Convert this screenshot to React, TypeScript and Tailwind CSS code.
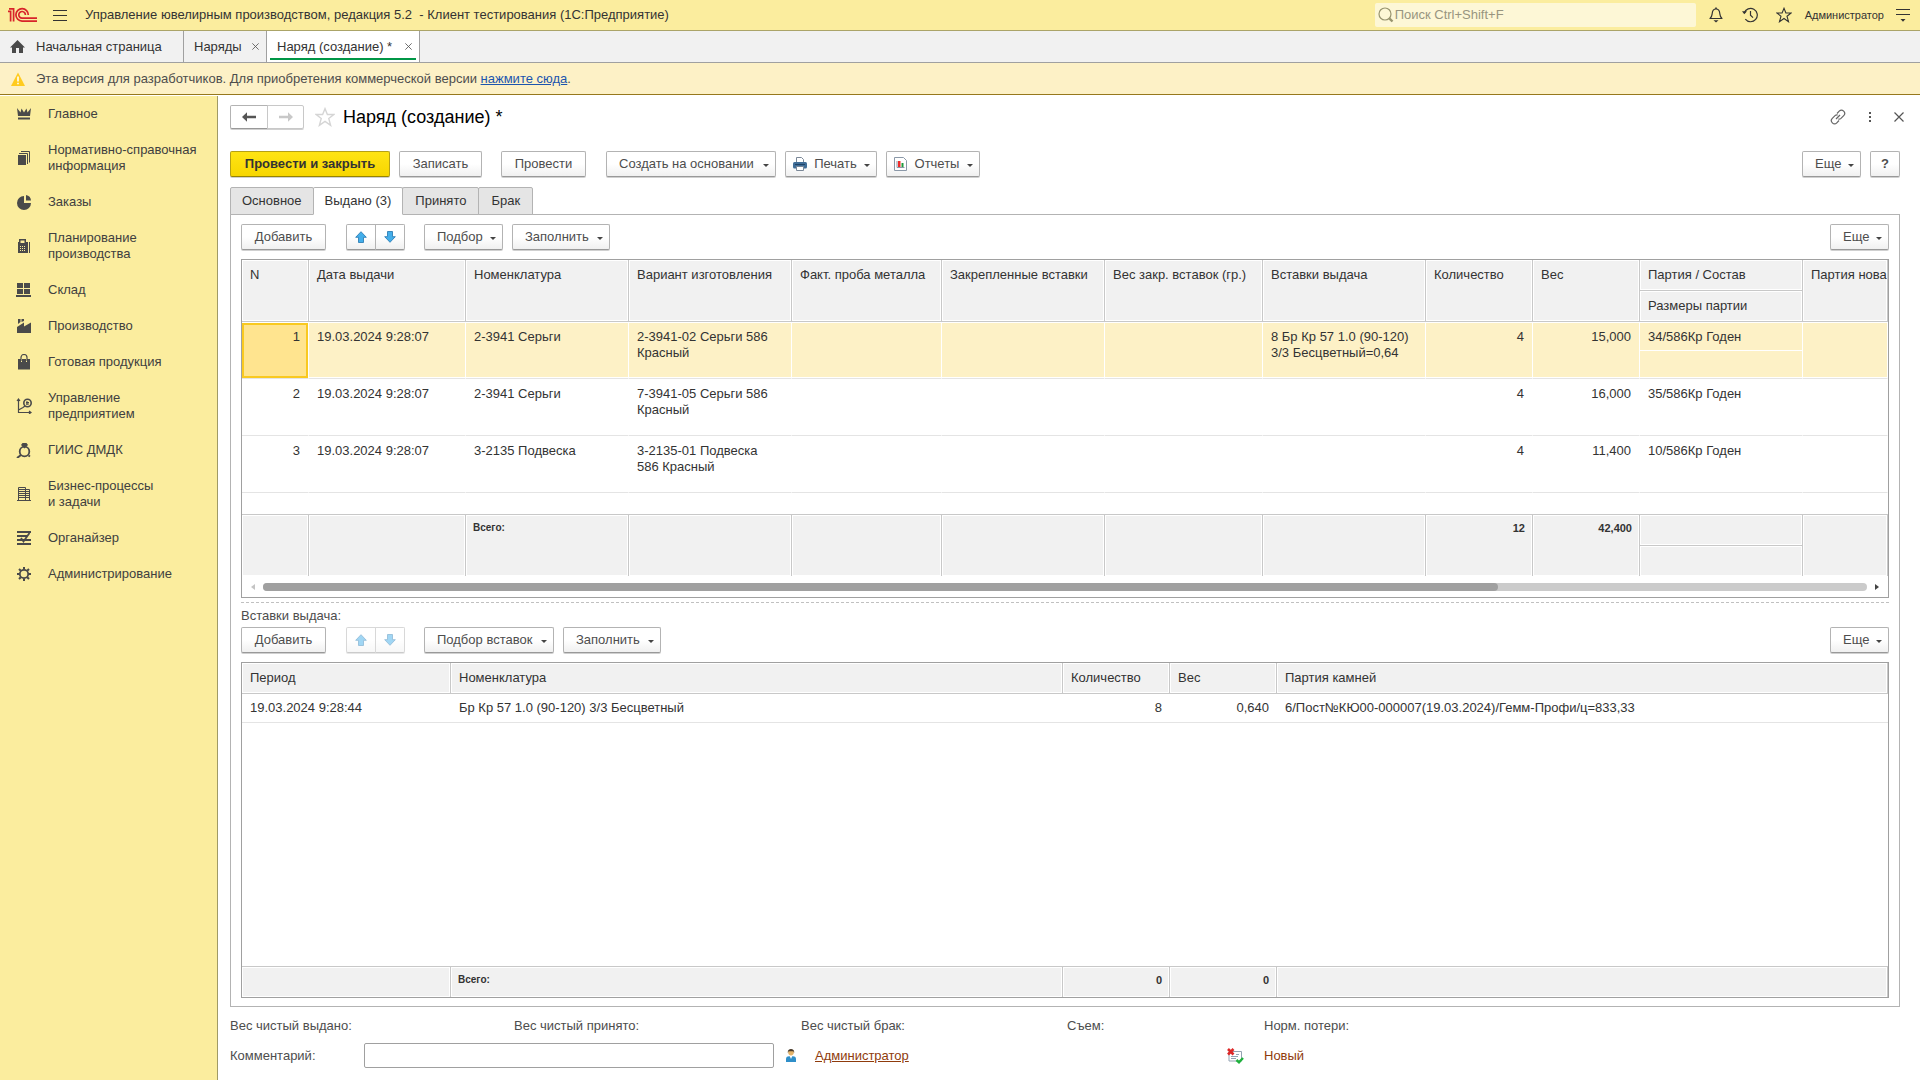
import { ReactNode } from 'react'
import clsx from 'clsx'

/* ---------- icons ---------- */

const Logo = () => (
  <svg width="30" height="16" viewBox="0 0 30 16" fill="none" stroke="#d8232a" strokeWidth="1.7">
    <path d="M0 4.300H2.600V14.500M1 1.800H5.600V14.500" />
    <path d="M20.300 8A6.200 6.200 0 1 0 14 14.100H29" />
    <path d="M17.400 8A3.300 3.300 0 1 0 14 11.100H29" />
  </svg>
)

const HomeIcon = () => (
  <svg width="15" height="13" viewBox="0 0 15 13" fill="#4a4a4a">
    <path d="M7.5 0 15 7.5H13V13H9V8H6V13H2V7.5H0L7.5 0Z" />
  </svg>
)

const WarningIcon = () => (
  <svg width="14" height="14" viewBox="0 0 14 14">
    <path d="M7 0.5 14 14H0Z" fill="#ffcb1f" />
    <path d="M6.2 4.5H7.8V9.5H6.2ZM6.2 10.7H7.8V12.2H6.2Z" fill="#fff" />
  </svg>
)

const SearchIcon = () => (
  <svg width="16" height="16" viewBox="0 0 16 16" fill="none" stroke="#98946f" className="shrink-0">
    <circle cx="7" cy="7" r="6" strokeWidth="1.2" />
    <path d="M11.3 11.3 14.5 14.5" strokeWidth="2.4" />
  </svg>
)

const BellIcon = () => (
  <svg width="14" height="16" viewBox="0 0 14 16" fill="none" stroke="#333" strokeWidth="1.2">
    <path d="M1 11.5C3 10 3 8.5 3.2 6.5C3.4 3.8 5 2 7 2C9 2 10.6 3.8 10.8 6.5C11 8.5 11 10 13 11.5Z" strokeLinejoin="round" />
    <path d="M7 0.5V2" strokeWidth="1.6" />
    <path d="M4.5 13.3H9.5L7 15.5Z" fill="#333" stroke="none" />
  </svg>
)

const HistoryIcon = () => (
  <svg width="16" height="16" viewBox="0 0 16 16" fill="none" stroke="#333" strokeWidth="1.2">
    <path d="M2.2 6A6.7 6.7 0 1 1 3.3 12.2" />
    <path d="M8.5 4V8.3L11 10.6" />
    <path d="M0 4.3H5L2.3 7.2Z" fill="#333" stroke="none" />
  </svg>
)

const StarIcon = ({ size, stroke }: { size: number; stroke: string }) => (
  <svg width={size} height={size} viewBox="0 0 16 16" fill="none" stroke={stroke} strokeWidth="1.1">
    <path d="M8 1.3 9.9 6H15.1L11 9.2 12.5 14.7 8 11.5 3.5 14.7 5 9.2 0.9 6H6.1Z" />
  </svg>
)

const ServiceIcon = () => (
  <svg width="14" height="14" viewBox="0 0 14 14" fill="#333">
    <path d="M0 1H14V2H0ZM0 6H14V7H0ZM4.5 11H9.5L7 13.7Z" />
  </svg>
)

const LinkIcon = () => (
  <svg width="16" height="16" viewBox="0 0 16 16" fill="none" stroke="#666" strokeWidth="1.2">
    <path d="M7 4.500 9.200 2.200A3 3 0 0 1 13.700 6.600L11 9.400A3 3 0 0 1 8.300 10" />
    <path d="M9 11.500 6.800 13.800A3 3 0 0 1 2.300 9.400L5 6.600A3 3 0 0 1 7.700 6" />
    <path d="M6 10 10 6" />
  </svg>
)

const CloseIcon = ({ size }: { size: number }) => (
  <svg width={size} height={size} viewBox="0 0 10 10" stroke="#555" strokeWidth="1.2">
    <path d="M0.5 0.5 9.5 9.5M9.5 0.5 0.5 9.5" />
  </svg>
)

const ArrowIcon = ({ className }: { className?: string }) => (
  <svg className={className} width="14" height="10" viewBox="0 0 14 10" fill="currentColor">
    <path d="M0 5 5 0.3V3.8H14V6.2H5V9.7Z" />
  </svg>
)

const MoveIcon = ({ down }: { down?: boolean }) => (
  <svg className={down ? 'rotate-180' : ''} width="12" height="12" viewBox="0 0 12 12" fill="#43aeea" stroke="#2f7fb5" strokeWidth="0.9">
    <path d="M6 0.7 11.3 6.3H8.5V11.5H3.5V6.3H0.7Z" />
  </svg>
)

const PrinterIcon = () => (
  <svg width="14" height="14" viewBox="0 0 14 14" className="shrink-0">
    <path d="M3.5 5V0.5H8.5L10.5 2.5V5" fill="#fff" stroke="#7a8797" />
    <rect y="5" width="14" height="6.5" rx="1.5" fill="#3f6d97" />
    <path d="M2 7H12V8H2Z" fill="#1f4266" />
    <path d="M3.5 9.5H10.5V13.5H3.5Z" fill="#fff" stroke="#7a8797" />
  </svg>
)

const ReportIcon = () => (
  <svg width="13" height="14" viewBox="0 0 13 14" className="shrink-0">
    <path d="M0.5 0.5H9.5L12.5 3.5V13.5H0.5Z" fill="#fff" stroke="#8b98a8" />
    <path d="M3 4V10.5H10.5" fill="none" stroke="#8b98a8" />
    <path d="M4 4H6.5V10H4Z" fill="#f02c2c" />
    <path d="M7.5 6H9.5V10H7.5Z" fill="#1f9a3c" />
  </svg>
)

const PersonIcon = () => (
  <svg width="10" height="13" viewBox="0 0 10 13">
    <circle cx="5" cy="3.6" r="2.8" fill="#e5b46a" />
    <path d="M1.8 4C1.5 1 3 0 5 0C7 0 8.5 1 8.2 4L7.3 2.3H2.7Z" fill="#4a3b2a" />
    <path d="M0 13V10C0 8 1.5 7.3 3 7.3H7C8.5 7.3 10 8 10 10V13Z" fill="#2f8fc9" />
    <path d="M3.7 7H6.3L5 10Z" fill="#fff" />
  </svg>
)

const StatusIcon = () => (
  <svg width="17" height="16" viewBox="0 0 17 16" fill="none">
    <path d="M2 3.5H14.5V13H2Z" fill="#fff" stroke="#94a3b3" />
    <path d="M4 8.5H11M4 10.5H9M9 6.5H12" stroke="#94a3b3" />
    <path d="M1 1 6.5 6.5M6.5 1 1 6.5" stroke="#dd2828" strokeWidth="2.6" />
    <path d="M9.5 12 12 14.3 16 10" stroke="#1fb13c" strokeWidth="2.4" />
  </svg>
)

/* section icons, 16px grid */
const G = '#4a4a4a'
const sectionIcons: Record<string, ReactNode> = {
  crown: <path fill={G} d="M1 2 4.5 6.5 5.5 2.5 8 6.5 10.5 2.5 11.500 6.5 15 2 14 10H2ZM2 11.5H14V13.5H2Z" />,
  docs: (
    <>
      <path fill={G} d="M2 5H10V15H2Z" />
      <path fill="none" stroke={G} d="M3 3.5H11.5V14M5 1.5H13.5V12.5" />
    </>
  ),
  pie: (
    <>
      <path fill={G} d="M8 2V9H15A7 7 0 1 1 8 2Z" />
      <path fill={G} d="M10 1A6 6 0 0 1 15 6.5H10Z" />
    </>
  ),
  calc: (
    <>
      <path fill={G} fillRule="evenodd" d="M3 1H10V4H12V15H2V4H3ZM4.500 2.500V5H8.500V2.500ZM4 8V9H5V8ZM6 8V9H7V8ZM8 8V9H9V8ZM4 10V11H5V10ZM6 10V11H7V10ZM8 10V11H9V10ZM4 12V13H5V12ZM6 12V13H7V12ZM8 12V13H9V12Z" />
      <path fill={G} d="M13 4H14V15H13Z" />
    </>
  ),
  boxes: <path fill={G} d="M1 1H7V6H1ZM8 1H14V6H8ZM1 7H7V12H1ZM8 7H14V12H8ZM0 13H15V15H0Z" />,
  factory: <path fill={G} d="M2 1H4.5V4L2 6ZM5.5 1H8V3L5.5 4ZM1 9 8 4.5V8.500L15 4.5V15H1Z" />,
  bag: (
    <>
      <path fill={G} d="M2 5H14V15.5H2Z" />
      <path fill="none" stroke="#fbed9e" d="M5.5 8V5M10.5 8V5" />
      <path fill="none" stroke={G} strokeWidth="1.2" d="M5 7V3.5A3 3 0 0 1 11 3.5V7" />
    </>
  ),
  chart: (
    <>
      <path fill="none" stroke={G} strokeWidth="1.2" d="M2.5 1V14.5H15M2.5 12 7 9.5 9 8M1 3 2.5 1 4 3M13 13 15 14.5 13 16" />
      <circle cx="11.5" cy="5" r="3.7" fill="none" stroke={G} strokeWidth="1.6" />
      <path fill="none" stroke={G} d="M11 3V7M10 4.5H13M10 6H13" />
    </>
  ),
  ring: (
    <>
      <circle cx="8.5" cy="9.5" r="4.8" fill="none" stroke={G} strokeWidth="1.8" />
      <path fill={G} d="M5 3 6.5 1H10.5L12 3 8.5 6.5Z" />
      <path fill="none" stroke={G} strokeWidth="2" d="M5 13 1 16M12.5 13.5 14 14.5" />
    </>
  ),
  building: (
    <>
      <path fill="none" stroke={G} d="M2.5 15V1.5H9.5V15M9.5 3.5H13.5V15M1 14.5H15" />
      <path stroke={G} d="M3 3.500H9M3 5.500H9M3 7.500H9M3 9.500H9M3 11.500H9M10 5.500H13M10 7.500H13M10 9.500H13M10 11.500H13" />
    </>
  ),
  organizer: (
    <>
      <path fill={G} d="M1 1H15V3H1ZM1 5H11V7H1ZM1 9H15V11H1ZM1 13H15V15H1Z" />
      <path fill="none" stroke={G} strokeWidth="1.8" d="M5 8 7.5 11.5 13.5 3" />
    </>
  ),
  gear: (
    <>
      <circle cx="8" cy="8" r="4.2" fill="none" stroke={G} strokeWidth="1.8" />
      <path stroke={G} strokeWidth="2" d="M8 1V3.5M8 12.5V15M1 8H3.5M12.5 8H15M3 3 4.8 4.8M11.2 11.2 13 13M3 13 4.8 11.2M11.2 4.8 13 3" />
    </>
  ),
}

/* ---------- data ---------- */

const sections = [
  { icon: 'crown', title: 'Главное' },
  { icon: 'docs', title: 'Нормативно-справочная\nинформация' },
  { icon: 'pie', title: 'Заказы' },
  { icon: 'calc', title: 'Планирование\nпроизводства' },
  { icon: 'boxes', title: 'Склад' },
  { icon: 'factory', title: 'Производство' },
  { icon: 'bag', title: 'Готовая продукция' },
  { icon: 'chart', title: 'Управление\nпредприятием' },
  { icon: 'ring', title: 'ГИИС ДМДК' },
  { icon: 'building', title: 'Бизнес-процессы\nи задачи' },
  { icon: 'organizer', title: 'Органайзер' },
  { icon: 'gear', title: 'Администрирование' },
]

const issued = [
  { n: 1, date: '19.03.2024 9:28:07', item: '2-3941 Серьги', variant: '2-3941-02 Серьги 586\nКрасный', inserts: '8 Бр Кр 57 1.0 (90-120)\n3/3 Бесцветный=0,64', qty: '4', weight: '15,000', lot: '34/586Кр Годен' },
  { n: 2, date: '19.03.2024 9:28:07', item: '2-3941 Серьги', variant: '7-3941-05 Серьги 586\nКрасный', inserts: '', qty: '4', weight: '16,000', lot: '35/586Кр Годен' },
  { n: 3, date: '19.03.2024 9:28:07', item: '3-2135 Подвеска', variant: '3-2135-01 Подвеска\n586 Красный', inserts: '', qty: '4', weight: '11,400', lot: '10/586Кр Годен' },
]

/* ---------- parts ---------- */

const Caret = () => <span className="mt-[3px] border-x-[3px] border-t-[3px] border-x-transparent border-t-[#444]" />

type ButtonProps = { children: ReactNode; icon?: ReactNode; menu?: boolean; className?: string }

function Button({ children, icon, menu, className }: ButtonProps) {
  return (
    <button
      type="button"
      className={clsx(
        'flex h-[26px] items-center rounded-xs border border-[#b3b3b3] border-b-[#999] bg-linear-to-b from-white from-50% to-[#f0f0f0] whitespace-nowrap text-[#4d4d4d] shadow-[0_1px_0_#d0d0d0]',
        menu ? 'justify-between pr-[6px]' : 'justify-center',
        menu && (icon ? 'pl-[7px]' : 'pl-3'),
        className,
      )}
    >
      {icon}
      {children}
      {menu && <Caret />}
    </button>
  )
}

function MoveButtons({ disabled }: { disabled?: boolean }) {
  return (
    <div className={clsx('flex', disabled && 'opacity-50')}>
      {['Переместить вверх', 'Переместить вниз'].map((label, i) => (
        <button
          key={label}
          type="button"
          aria-label={label}
          disabled={disabled}
          className={clsx(
            'flex h-[26px] w-[30px] items-center justify-center border border-[#b3b3b3] border-b-[#999] bg-linear-to-b from-white from-50% to-[#f0f0f0] shadow-[0_1px_0_#d0d0d0]',
            i === 0 ? 'rounded-l-xs' : '-ml-px rounded-r-xs',
          )}
        >
          <MoveIcon down={i === 1} />
        </button>
      ))}
    </div>
  )
}

const head = 'border-r border-b border-[#c8c8c8] bg-[#f1f1f1] pt-[7px] pl-2 text-left align-top font-normal whitespace-nowrap shadow-[inset_0_0_0_1px_white]'
const foot = 'border-t border-r border-[#c8c8c8] bg-[#f1f1f1] px-[7px] pt-[5px] align-top font-bold shadow-[inset_0_0_0_1px_white]'
const footNumber = clsx(foot, 'text-right text-[11px]')
const footTitle = clsx(foot, 'text-left text-[10px]')

function IssuedTable() {
  return (
    <div className="overflow-hidden border border-[#a0a0a0]">
      <table className="w-full table-fixed border-separate border-spacing-0 leading-4">
        <colgroup>
          <col className="w-[67px]" />
          <col className="w-[157px]" />
          <col className="w-[163px]" />
          <col className="w-[163px]" />
          <col className="w-[150px]" />
          <col className="w-[163px]" />
          <col className="w-[158px]" />
          <col className="w-[163px]" />
          <col className="w-[107px]" />
          <col className="w-[107px]" />
          <col className="w-[163px]" />
          <col />
        </colgroup>
        <thead>
          <tr className="h-[31px]">
            {['N', 'Дата выдачи', 'Номенклатура', 'Вариант изготовления', 'Факт. проба металла', 'Закрепленные вставки', 'Вес закр. вставок (гр.)', 'Вставки выдача', 'Количество', 'Вес'].map((title) => (
              <th key={title} rowSpan={2} className={head}>{title}</th>
            ))}
            <th className={head}>Партия / Состав</th>
            <th rowSpan={2} className={clsx(head, 'overflow-hidden')}>Партия нова</th>
          </tr>
          <tr className="h-[31px]">
            <th className={head}>Размеры партии</th>
          </tr>
        </thead>
        <tbody>
          {issued.map((row) => {
            const active = row.n === 1
            const base = 'border-r border-b border-r-white border-b-[#e4e4e4] pt-[7px] align-top whitespace-pre'
            const fill = active && 'bg-[#fdf1c6] shadow-[inset_0_1px_0_white,inset_0_-1px_0_white]'
            const cell = clsx(base, fill, 'px-2')
            return (
              <tr key={row.n} className="h-[57px]">
                <td
                  className={clsx(
                    base,
                    'px-2 text-right',
                    active && 'bg-[#ffe48f] shadow-[inset_0_1px_0_white,inset_0_0_0_2px_#f9c920,inset_0_3px_0_#f9c920]',
                  )}
                >
                  {row.n}
                </td>
                <td className={cell}>{row.date}</td>
                <td className={cell}>{row.item}</td>
                <td className={cell}>{row.variant}</td>
                <td className={cell} />
                <td className={cell} />
                <td className={cell} />
                <td className={cell}>{row.inserts}</td>
                <td className={clsx(cell, 'text-right')}>{row.qty}</td>
                <td className={clsx(cell, 'text-right')}>{row.weight}</td>
                <td className={clsx(base, fill)}>
                  <div className="h-[22px] border-b border-white px-2">{row.lot}</div>
                </td>
                <td className={cell} />
              </tr>
            )
          })}
          <tr className="h-[21px]">
            <td colSpan={12} />
          </tr>
        </tbody>
        <tfoot>
          <tr className="h-[31px]">
            <td rowSpan={2} className={foot} />
            <td rowSpan={2} className={foot} />
            <td rowSpan={2} className={footTitle}>Всего:</td>
            <td rowSpan={2} className={foot} />
            <td rowSpan={2} className={foot} />
            <td rowSpan={2} className={foot} />
            <td rowSpan={2} className={foot} />
            <td rowSpan={2} className={foot} />
            <td rowSpan={2} className={footNumber}>12</td>
            <td rowSpan={2} className={footNumber}>42,400</td>
            <td className={foot} />
            <td rowSpan={2} className={foot} />
          </tr>
          <tr className="h-[31px]">
            <td className={foot} />
          </tr>
        </tfoot>
      </table>
      <div className="flex h-[21px] items-center justify-between px-[9px]">
        <span className="border-y-[3px] border-r-4 border-y-transparent border-r-[#c4c4c4]" />
        <div className="mx-2 h-2 flex-1 rounded-full bg-[#cbcbcb]">
          <div className="h-2 w-[77%] rounded-full bg-[#a0a0a0]" />
        </div>
        <span className="border-y-[3px] border-l-4 border-y-transparent border-l-[#444]" />
      </div>
    </div>
  )
}

function InsertsTable() {
  const cols = (
    <colgroup>
      <col className="w-[209px]" />
      <col className="w-[612px]" />
      <col className="w-[107px]" />
      <col className="w-[107px]" />
      <col />
    </colgroup>
  )
  const cell = 'border-b border-[#e4e4e4] px-2'
  return (
    <div className="flex flex-1 flex-col justify-between overflow-hidden border border-[#a0a0a0]">
      <table className="w-full table-fixed border-separate border-spacing-0 leading-4">
        {cols}
        <thead>
          <tr className="h-[31px]">
            {['Период', 'Номенклатура', 'Количество', 'Вес', 'Партия камней'].map((title) => (
              <th key={title} className={head}>{title}</th>
            ))}
          </tr>
        </thead>
        <tbody>
          <tr className="h-[29px]">
            <td className={cell}>19.03.2024 9:28:44</td>
            <td className={cell}>Бр Кр 57 1.0 (90-120) 3/3 Бесцветный</td>
            <td className={clsx(cell, 'text-right')}>8</td>
            <td className={clsx(cell, 'text-right')}>0,640</td>
            <td className={cell}>6/Пост№КЮ00-000007(19.03.2024)/Гемм-Профи/ц=833,33</td>
          </tr>
        </tbody>
      </table>
      <table className="w-full table-fixed border-separate border-spacing-0 leading-4">
        {cols}
        <tbody>
          <tr className="h-[31px]">
            <td className={foot} />
            <td className={footTitle}>Всего:</td>
            <td className={footNumber}>0</td>
            <td className={footNumber}>0</td>
            <td className={foot} />
          </tr>
        </tbody>
      </table>
    </div>
  )
}

const pageTabs = ['Основное', 'Выдано (3)', 'Принято', 'Брак']

export default function App() {
  return (
    <div className="flex min-h-screen flex-col bg-white font-['Liberation_Sans',Arial,sans-serif] text-[13px] leading-4 text-[#333]">
      <header className="flex h-[31px] items-center border-b border-[#aba468] bg-[#fbed9e] pr-[10px] pl-2">
        <Logo />
        <button type="button" aria-label="Меню" className="ml-[15px] flex w-[14px] flex-col gap-1">
          <span className="h-px bg-[#333]" />
          <span className="h-px bg-[#333]" />
          <span className="h-px bg-[#333]" />
        </button>
        <span className="ml-[18px] whitespace-pre">Управление ювелирным производством, редакция 5.2  - Клиент тестирования (1С:Предприятие)</span>
        <label className="ml-auto flex h-6 w-[321px] items-center rounded-xs bg-[#fdf7d6] pl-[3px]">
          <SearchIcon />
          <input
            type="text"
            aria-label="Поиск"
            placeholder="Поиск Ctrl+Shift+F"
            className="ml-px w-full bg-transparent outline-none placeholder:text-[#98957f]"
          />
        </label>
        <button type="button" aria-label="Уведомления" className="ml-[13px]"><BellIcon /></button>
        <button type="button" aria-label="История" className="ml-[19px]"><HistoryIcon /></button>
        <button type="button" aria-label="Избранное" className="ml-[18px]"><StarIcon size={16} stroke="#333" /></button>
        <button type="button" className="ml-[13px] text-[11px]">Администратор</button>
        <button type="button" aria-label="Сервис" className="ml-3"><ServiceIcon /></button>
      </header>

      <nav className="flex h-8 border-b border-[#a0a0a0] bg-[#f1f1f1]">
        <button type="button" className="flex w-[184px] items-center gap-[11px] border-r border-[#a0a0a0] pl-[10px]">
          <HomeIcon />
          Начальная страница
        </button>
        <div className="flex w-[83px] items-center justify-between border-r border-[#a0a0a0] pr-[7px] pl-[10px]">
          <button type="button">Наряды</button>
          <button type="button" aria-label="Закрыть Наряды"><CloseIcon size={7} /></button>
        </div>
        <div className="flex w-[153px] border-r border-[#a0a0a0] bg-white px-[3px] pb-[2px]">
          <div className="flex flex-1 items-center justify-between border-b-2 border-[#009646] pt-1 pr-1 pl-[7px]">
            <button type="button">Наряд (создание) *</button>
            <button type="button" aria-label="Закрыть Наряд"><CloseIcon size={7} /></button>
          </div>
        </div>
      </nav>

      <div className="flex h-8 items-center border-b border-[#96781c] bg-[#fdf1c6] pl-[11px] text-[#4d4d4d]">
        <WarningIcon />
        <p className="ml-[11px]">
          Эта версия для разработчиков. Для приобретения коммерческой версии <a href="#buy" className="text-[#1c55ae] underline">нажмите сюда</a>.
        </p>
      </div>

      <div className="flex flex-1 pt-px">
        <aside className="w-[218px] shrink-0 border-r border-[#a09a66] bg-[#fbed9e]">
          {sections.map((s) => (
            <a key={s.title} href="#section" className="flex items-center gap-4 py-[10px] pl-4 text-[#404040]">
              <svg width="16" height="16" viewBox="0 0 16 16" className="shrink-0">{sectionIcons[s.icon]}</svg>
              <span className="whitespace-pre">{s.title}</span>
            </a>
          ))}
        </aside>

        <main className="flex min-w-0 flex-1 flex-col pt-[9px] pr-5 pb-3 pl-3">
          <div className="flex h-6 items-center">
            <button type="button" aria-label="Назад" className="flex h-6 w-[38px] items-center justify-center rounded-l-xs border border-[#b3b3b3] border-b-[#999] text-[#555] shadow-[0_1px_0_#d0d0d0]"><ArrowIcon /></button>
            <button type="button" aria-label="Вперед" className="-ml-px flex h-6 w-[37px] items-center justify-center rounded-r-xs border border-[#c8c8c8] text-[#c8c8c8] shadow-[0_1px_0_#d0d0d0]"><ArrowIcon className="rotate-180" /></button>
            <button type="button" aria-label="В избранное" className="ml-[11px]"><StarIcon size={20} stroke="#d5d5d5" /></button>
            <h1 className="ml-2 text-[18px] leading-6 text-black">Наряд (создание) *</h1>
            <div className="-mr-1 ml-auto flex items-center gap-[23px]">
              <button type="button" aria-label="Ссылка"><LinkIcon /></button>
              <button type="button" aria-label="Действия" className="flex flex-col gap-[2px]">
                <span className="size-[2px] bg-[#555]" />
                <span className="size-[2px] bg-[#555]" />
                <span className="size-[2px] bg-[#555]" />
              </button>
              <button type="button" aria-label="Закрыть"><CloseIcon size={10} /></button>
            </div>
          </div>

          <div className="mt-[22px] flex">
            <button type="button" className="h-[26px] w-40 rounded-xs border border-[#b5a016] border-b-[#978400] bg-linear-to-b from-[#ffe413] to-[#f7d600] font-bold whitespace-nowrap shadow-[0_1px_0_#d0d0d0]">Провести и закрыть</button>
            <Button className="ml-[9px] w-[83px]">Записать</Button>
            <Button className="ml-[19px] w-[85px]">Провести</Button>
            <Button menu className="ml-5 w-[170px]">Создать на основании</Button>
            <Button menu icon={<PrinterIcon />} className="ml-[9px] w-[92px]">Печать</Button>
            <Button menu icon={<ReportIcon />} className="ml-[9px] w-[94px]">Отчеты</Button>
            <Button menu className="ml-auto w-[59px]">Еще</Button>
            <Button className="ml-[9px] w-[30px] font-bold">?</Button>
          </div>

          <div role="tablist" className="mt-[10px] flex">
            {pageTabs.map((tab, i) => (
              <button
                key={tab}
                type="button"
                role="tab"
                aria-selected={i === 1}
                className={clsx(
                  'relative -mb-px h-7 rounded-t-xs border border-[#b3b3b3]',
                  i === 1 ? 'z-10 border-b-white bg-white' : 'bg-[#e5e5e5]',
                  i < 2 ? 'px-[11px]' : 'px-3',
                  i > 0 && '-ml-px',
                )}
              >
                {tab}
              </button>
            ))}
          </div>

          <section className="flex flex-1 flex-col border border-[#b3b3b3] px-[10px] pt-[9px] pb-2">
            <div className="flex">
              <Button className="w-[85px]">Добавить</Button>
              <div className="ml-5"><MoveButtons /></div>
              <Button menu className="ml-[19px] w-[79px]">Подбор</Button>
              <Button menu className="ml-[9px] w-[98px]">Заполнить</Button>
              <Button menu className="ml-auto w-[59px]">Еще</Button>
            </div>
            <div className="mt-[9px]"><IssuedTable /></div>
            <div className="mt-1 border-t border-dashed border-[#c0c0c0]" />
            <h2 className="mt-[5px] text-[#4d4d4d]">Вставки выдача:</h2>
            <div className="mt-[3px] mb-[9px] flex">
              <Button className="w-[85px]">Добавить</Button>
              <div className="ml-5"><MoveButtons disabled /></div>
              <Button menu className="ml-[19px] w-[130px]">Подбор вставок</Button>
              <Button menu className="ml-[9px] w-[98px]">Заполнить</Button>
              <Button menu className="ml-auto w-[59px]">Еще</Button>
            </div>
            <InsertsTable />
          </section>

          <div className="mt-[11px] flex text-[#4d4d4d]">
            <span className="w-[284px]">Вес чистый выдано:</span>
            <span className="w-[287px]">Вес чистый принято:</span>
            <span className="w-[266px]">Вес чистый брак:</span>
            <span className="w-[197px]">Съем:</span>
            <span>Норм. потери:</span>
          </div>
          <div className="mt-[9px] flex items-center text-[#4d4d4d]">
            <label htmlFor="comment" className="w-[134px]">Комментарий:</label>
            <input id="comment" type="text" className="h-[25px] w-[410px] rounded-xs border border-[#a0a0a0] px-2 outline-none" />
            <div className="ml-3 flex w-[441px] items-center gap-[19px]">
              <PersonIcon />
              <a href="#user" className="text-[#8f3b0c] underline">Администратор</a>
            </div>
            <StatusIcon />
            <span className="ml-5 text-[#8f3b0c]">Новый</span>
          </div>
        </main>
      </div>
    </div>
  )
}
